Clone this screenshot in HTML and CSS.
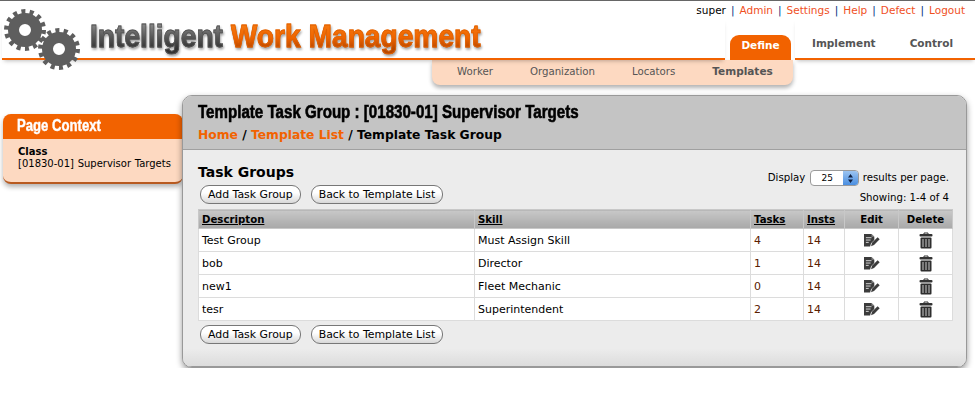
FILE: index.html
```html
<!DOCTYPE html>
<html lang="en">
<head>
<meta charset="UTF-8">
<meta name="viewport" content="width=device-width, initial-scale=1.0">
<title>Intelligent Work Management</title>
<link rel="stylesheet" href="styles.css">
</head>
<body>
<svg class="defs" width="0" height="0">
    <symbol id="icon-edit" viewBox="0 0 18 16">
        <path d="M1 1h8l3 3v3.5L8.5 11 7.5 14.5 H1z" fill="#3c3c3c"/>
        <path d="M3 5h6M3 7.5h5M3 10h3" stroke="#ddd" stroke-width="1"/>
        <path d="M9 1v3h3z" fill="#888"/>
        <path d="M8.5 14l1-3.5 6-6 2.2 2.2-6 6z" fill="#3c3c3c"/>
    </symbol>
    <symbol id="icon-trash" viewBox="0 0 14 17">
        <path d="M5 2V1h4v1" fill="none" stroke="#333" stroke-width="1"/>
        <rect x="0.5" y="2" width="13" height="2.5" rx="1" fill="#333"/>
        <rect x="1.5" y="5.5" width="11" height="11" rx="1" fill="#2e2e2e"/>
        <path d="M4 7v8M7 7v8M10 7v8" stroke="#c8c8c8" stroke-width="1"/>
    </symbol>
</svg>

<div class="toplinks">
    super <span class="sep">|</span> <a href="#">Admin</a> <span class="sep">|</span> <a href="#">Settings</a>
    <span class="sep">|</span> <a href="#">Help</a> <span class="sep">|</span> <a href="#">Defect</a>
    <span class="sep">|</span> <a href="#">Logout</a>
</div>

<div class="masthead">
    <div class="brand">
        <svg class="gears" width="80" height="70" viewBox="0 0 80 70">
            <g fill="none" stroke="#5e5e5e">
                <circle cx="25" cy="30" r="11.5" stroke-width="11"/>
                <circle cx="25" cy="30" r="18.5" stroke-width="5" stroke-dasharray="4 4.3"/>
                <circle cx="59" cy="49" r="11.5" stroke-width="11"/>
                <circle cx="59" cy="49" r="18.5" stroke-width="5" stroke-dasharray="4 4.3"/>
            </g>
        </svg>
        <div class="logo"><span class="logo-grey">Intelligent</span> <span class="logo-orange">Work Management</span></div>
    </div>
    <a class="tab tab-active" href="#">Define</a>
    <div class="tabs-rest">
        <a class="tab" href="#">Implement</a>
        <a class="tab" href="#">Control</a>
    </div>
</div>

<div class="subnav">
    <a href="#">Worker</a>
    <a href="#">Organization</a>
    <a href="#">Locators</a>
    <a href="#" class="current">Templates</a>
</div>

<div class="content">
    <div class="sidebar">
        <div class="sidebar-title"><span>Page Context</span></div>
        <div class="sidebar-body">
            <b>Class</b><br>
            [01830-01] Supervisor Targets
        </div>
    </div>

    <div class="panel">
        <div class="panel-head">
            <h1 class="panel-title">Template Task Group : [01830-01] Supervisor Targets</h1>
            <div class="crumbs"><a href="#">Home</a> / <a href="#">Template List</a> / Template Task Group</div>
        </div>
        <div class="panel-body">
            <div class="toolbar">
                <div>
                    <h2>Task Groups</h2>
                    <div class="buttons">
                        <button>Add Task Group</button>
                        <button>Back to Template List</button>
                    </div>
                </div>
                <div class="paging">
                    <div>Display <span class="select"><span class="select-val">25</span><span class="select-arrows"><svg width="7" height="11" viewBox="0 0 7 11"><path d="M3.5 1L6 4.5H1zM3.5 10L6 6.5H1z" fill="#102040"/></svg></span></span> results per page.</div>
                    <div class="showing">Showing: 1-4 of 4</div>
                </div>
            </div>

            <table>
                <thead>
                    <tr>
                        <th class="c-desc"><a href="#">Descripton</a></th>
                        <th class="c-skill"><a href="#">Skill</a></th>
                        <th class="c-tasks"><a href="#">Tasks</a></th>
                        <th class="c-insts"><a href="#">Insts</a></th>
                        <th class="c-icon c-edit">Edit</th>
                        <th class="c-icon">Delete</th>
                    </tr>
                </thead>
                <tbody>
                    <tr>
                        <td>Test Group</td><td>Must Assign Skill</td><td><a href="#">4</a></td><td><a href="#">14</a></td>
                        <td class="c-icon"><svg width="17" height="15"><use href="#icon-edit"/></svg></td>
                        <td class="c-icon"><svg width="14" height="17"><use href="#icon-trash"/></svg></td>
                    </tr>
                    <tr>
                        <td>bob</td><td>Director</td><td><a href="#">1</a></td><td><a href="#">14</a></td>
                        <td class="c-icon"><svg width="17" height="15"><use href="#icon-edit"/></svg></td>
                        <td class="c-icon"><svg width="14" height="17"><use href="#icon-trash"/></svg></td>
                    </tr>
                    <tr>
                        <td>new1</td><td>Fleet Mechanic</td><td><a href="#">0</a></td><td><a href="#">14</a></td>
                        <td class="c-icon"><svg width="17" height="15"><use href="#icon-edit"/></svg></td>
                        <td class="c-icon"><svg width="14" height="17"><use href="#icon-trash"/></svg></td>
                    </tr>
                    <tr>
                        <td>tesr</td><td>Superintendent</td><td><a href="#">2</a></td><td><a href="#">14</a></td>
                        <td class="c-icon"><svg width="17" height="15"><use href="#icon-edit"/></svg></td>
                        <td class="c-icon"><svg width="14" height="17"><use href="#icon-trash"/></svg></td>
                    </tr>
                </tbody>
            </table>

            <div class="buttons buttons-bottom">
                <button>Add Task Group</button>
                <button>Back to Template List</button>
            </div>
        </div>
    </div>
</div>
</body>
</html>
```

FILE: styles.css
```css
/* page */
body {
    margin: 0;
    border-top: 1px solid #666;
    background: #fff;
    color: #000;
    font-family: "DejaVu Sans", Verdana, sans-serif;
    font-size: 11px;
}
a {
    text-decoration: none;
}
.defs {
    display: block;
    height: 0;
}

/* top links */
.toplinks {
    height: 18px;
    line-height: 19px;
    padding-right: 10px;
    text-align: right;
    font-size: 10.5px;
}
.toplinks a {
    color: #f0501e;
}
.sep {
    color: #003080;
    margin: 0 1.7px;
}

/* logo and tabs */
.masthead {
    display: flex;
    height: 41px;
}
.brand {
    display: flex;
    width: 723px;
    margin-left: 2px;
    height: 39px;
    border-bottom: 2px solid #f26200;
    box-shadow: 0 3px 4px -2px rgba(0, 0, 0, 0.25);
}
.gears {
    flex: none;
    margin: -19px 0 -11px -2px;
    position: relative;
    z-index: 2;
}
.logo {
    margin: -1px 0 0 10px;
    white-space: nowrap;
    font-family: "Liberation Sans", Arial, sans-serif;
    font-size: 32px;
    font-weight: bold;
    line-height: 36px;
    transform: scaleX(0.88);
    transform-origin: left center;
    filter: drop-shadow(1px 2px 1px rgba(0, 0, 0, 0.35));
}
.logo-grey, .logo-orange {
    -webkit-background-clip: text;
    background-clip: text;
    color: transparent;
}
.logo-grey {
    background-image: linear-gradient(#8a8a8a 15%, #555 55%, #333 85%);
    -webkit-text-stroke: 0.8px #555;
}
.logo-orange {
    background-image: linear-gradient(#f67a10 15%, #ef6400 55%, #b84800 85%);
    -webkit-text-stroke: 0.8px #e06000;
}
.tab {
    font-size: 10.5px;
    font-weight: bold;
    color: #555;
}
.tab-active {
    flex: none;
    width: 61px;
    height: 25px;
    margin: 16px 4px 0 5px;
    background: #f26200;
    border-radius: 9px 9px 0 0;
    color: #fff;
    text-align: center;
    line-height: 21px;
}
.tabs-rest {
    flex: 1;
    display: flex;
    height: 39px;
    border-bottom: 2px solid #f26200;
    box-shadow: 0 3px 4px -2px rgba(0, 0, 0, 0.25);
}
.tabs-rest .tab {
    margin-top: 18px;
    margin-left: 17px;
}
.tabs-rest .tab + .tab {
    margin-left: 34px;
}

/* sub navigation */
.subnav {
    display: flex;
    gap: 37px;
    width: 336px;
    height: 25px;
    margin-left: 432px;
    padding-left: 25px;
    background: #fdd9c1;
    border-radius: 0 0 8px 8px;
    box-shadow: 0 3px 4px rgba(0, 0, 0, 0.3);
    font-size: 10.2px;
    line-height: 23px;
}
.subnav a {
    color: #555;
}
.subnav .current {
    font-size: 10.5px;
    font-weight: bold;
}

/* main row */
.content {
    display: flex;
    align-items: flex-start;
    margin-top: 10px;
}
.sidebar {
    flex: none;
    width: 180px;
    margin: 19px 0 0 3px;
    border-bottom: 2px solid #b85a20;
    border-radius: 8px;
    background: #fdd9c1;
    box-shadow: 0 3px 5px rgba(0, 0, 0, 0.3);
    overflow: hidden;
}
.sidebar-title {
    height: 25px;
    padding-left: 14px;
    background: #f26200;
    color: #fff;
    font-family: "Liberation Sans", Arial, sans-serif;
    font-size: 16px;
    font-weight: bold;
    line-height: 24px;
    -webkit-text-stroke: 0.4px #fff;
}
.sidebar-title span {
    display: inline-block;
    transform: scaleX(0.82);
    transform-origin: left center;
}
.sidebar-body {
    height: 43px;
    padding: 7px 0 0 15px;
    box-sizing: border-box;
    font-size: 10px;
    line-height: 12px;
    white-space: nowrap;
    word-spacing: 0.5px;
}
.panel {
    flex: none;
    position: relative;
    width: 783px;
    margin-left: -1px;
    border: 1px solid #999;
    border-radius: 10px;
    background: #ececec;
    box-shadow: 0 3px 6px rgba(0, 0, 0, 0.4);
    overflow: hidden;
}
.panel-head {
    height: 53px;
    padding-left: 15px;
    background: #c4c4c4;
    border-bottom: 1px solid #a0a0a0;
}
.panel-title {
    margin: 0;
    padding-top: 6px;
    height: 23px;
    white-space: nowrap;
    font-family: "Liberation Sans", Arial, sans-serif;
    font-size: 18px;
    line-height: 20px;
    -webkit-text-stroke: 0.6px #000;
    transform: scaleX(0.84);
    transform-origin: left center;
}
.crumbs {
    margin-top: 2px;
    font-size: 12.3px;
    font-weight: bold;
    line-height: 16px;
}
.crumbs a {
    color: #f26200;
}
.panel-body {
    height: 216px;
    padding: 0 13px 0 15px;
    border-bottom: 1px solid #999;
    background: linear-gradient(#ececec 92%, #dcdcdc);
}
.toolbar {
    display: flex;
    justify-content: space-between;
    height: 59px;
}
h2 {
    margin: 14px 0 0;
    font-size: 14px;
    line-height: 16px;
}
.buttons {
    display: flex;
    gap: 10px;
    margin: 5px 0 0 2px;
}
.buttons-bottom {
    margin-top: 4px;
}
button {
    height: 19px;
    padding: 0 7px;
    border: 1px solid #777;
    border-radius: 9px;
    background: linear-gradient(#fff 40%, #d8d8d8);
    color: #000;
    font-family: inherit;
    font-size: 10.9px;
}
.paging {
    padding: 20px 4px 0 0;
    font-size: 10.2px;
    text-align: right;
}
.select {
    display: inline-flex;
    width: 47px;
    height: 14px;
    margin: 0 1px;
    vertical-align: middle;
    border: 1px solid #9a9a9a;
    border-radius: 4px;
    background: #fff;
    font-size: 9px;
    line-height: 14px;
    overflow: hidden;
}
.select-val {
    flex: 1;
    padding-left: 11px;
    text-align: left;
}
.select-arrows {
    display: flex;
    align-items: center;
    justify-content: center;
    width: 15px;
    background: linear-gradient(#9cc4f0, #4a8ee0);
}
.showing {
    margin-top: 6px;
}

/* table */
table {
    width: 755px;
    border-collapse: collapse;
    table-layout: fixed;
}
th, td {
    box-sizing: border-box;
    border: 1px solid #dcdcdc;
    padding: 0 3px;
    text-align: left;
}
th {
    height: 19px;
    border-color: #c8c8c8;
    background: linear-gradient(#c8c8c8, #a8a8a8);
    font-size: 10.2px;
}
td {
    height: 23px;
    background: #fff;
}
th a {
    color: #000;
    text-decoration: underline;
}
td a {
    color: #5a2000;
}
.c-desc, .c-skill {
    width: 276px;
}
.c-tasks {
    width: 53px;
}
.c-insts {
    width: 41px;
}
.c-edit {
    width: 54px;
}
th.c-icon, td.c-icon {
    text-align: center;
}
td.c-icon svg {
    display: block;
    margin: 0 auto;
}
```
